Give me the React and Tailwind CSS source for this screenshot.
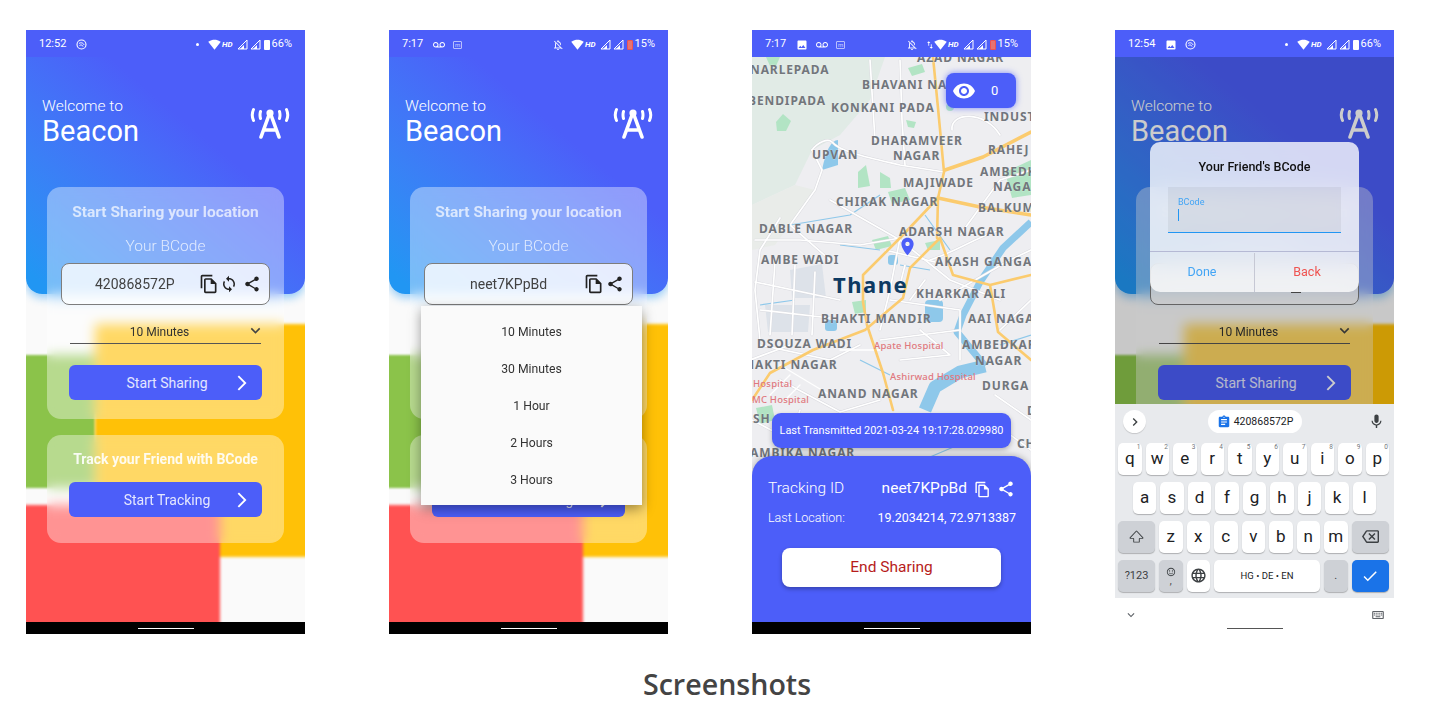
import React from "react";
import {
  MdOutlineFileCopy, MdSync, MdShare, MdArrowForwardIos, MdKeyboardArrowDown, MdRemoveRedEye, MdLocationOn,
  MdSignalWifi4Bar, MdVoicemail, MdImage, MdOutlineNotificationsOff, MdChevronRight, MdMic, MdAssignment,
  MdCheck, MdLanguage, MdOutlineBackspace, MdOutlineSentimentSatisfied, MdOutlineKeyboard, MdImportExport,
} from "react-icons/md";
import { BsShift } from "react-icons/bs";

const Sig = () => (
  <svg width="11" height="11" viewBox="0 0 11 11"><path d="M1 10L10 1V10Z" fill="none" stroke="white" strokeWidth="1" /><path d="M3 10L7 6V10Z" fill="white" /></svg>
);

const LinkIco = () => (
  <svg width="11" height="11" viewBox="0 0 11 11" fill="none" stroke="white"><circle cx="5.5" cy="5.5" r="4.5" strokeWidth="1.1" /><path d="M3 4.5C5 3 7.5 4 8 6M3.5 6.5C5 5.5 6.5 6 7 7.5" strokeWidth="1" /></svg>
);

const MBox = () => (
  <span className="w-[9px] h-[8px] border border-white/60 rounded-[1px] text-[6px] leading-[6px] text-center text-white/70">m</span>
);

function Status({ time, left, pct, low, mute, dot, arrows }) {
  return (
    <div className="relative z-20 h-[27px] shrink-0 bg-[#4c5ef9] flex items-center justify-between pl-[13px] pr-[13px] pt-[2px] text-white text-[11px] font-['Roboto',sans-serif]">
      <div className="flex items-center gap-[8px]"><span className="mr-[2px]">{time}</span>{left}</div>
      <div className="flex items-center">
        {dot && <span className="w-[3px] h-[3px] rounded-full bg-white mr-[9px]" />}
        {mute && <MdOutlineNotificationsOff size={12} className="mr-[7px] opacity-90" />}
        {arrows && <MdImportExport size={10} className="-mr-[1px]" />}
        <MdSignalWifi4Bar size={13} />
        <span className="text-[8px] font-bold italic ml-[1px] mr-[4px]">HD</span>
        <Sig /><span className="w-[2px]" /><Sig />
        <span className={`ml-[3px] mr-[1px] w-[6px] h-[10px] rounded-[1px] ${low ? "bg-[#e57373] border border-[#ef5350]" : "bg-white"}`} />
        <span className="ml-[1px]">{pct}</span>
      </div>
    </div>
  );
}

function Logo() {
  return (
    <svg width="40" height="32" viewBox="0 0 40 32" fill="none" stroke="white" strokeWidth="3.6" strokeLinecap="round">
      <circle cx="20" cy="6" r="3.6" fill="white" stroke="none" />
      <path d="M19 8L11 30M21 8L29 30M14 23H26" />
      <path d="M3.5 2.5Q1 8 3.5 13.5M10.5 4.5Q9.5 8 10.5 11.5M36.5 2.5Q39 8 36.5 13.5M29.5 4.5Q30.5 8 29.5 11.5" strokeWidth="3" />
    </svg>
  );
}

function GoButton({ label, offset }) {
  return (
    <div className="relative h-[35px] w-[193px] mx-auto rounded-[6px] bg-[#4c5ef9] flex items-center justify-center text-white/85 text-[14px]">
      <span className={`pt-[1px] ${offset}`}>{label}</span>
      <MdArrowForwardIos size={18} className="absolute right-[11px] text-white" />
    </div>
  );
}

function Home({ code, sync, covered }) {
  return (
    <div className="relative flex-1 flex flex-col min-h-0">
      <div className="absolute inset-0 bg-[#fafafa] overflow-hidden">
        <div className="absolute -left-[6px] top-[298px] w-[75px] h-[133px] bg-[#8bc34a] blur-[1px]" />
        <div className="absolute left-[69px] top-[267px] w-[216px] h-[233px] bg-[#ffc107] blur-[1.5px]" />
        <div className="absolute -left-[6px] top-[448px] w-[200px] h-[130px] bg-[#ff5252] blur-[1.5px]" />
        <div className="absolute left-0 top-0 w-full h-[237px] rounded-b-[16px] bg-linear-to-tr from-[#2196f3] from-5% to-[#4c5ef9] to-65% shadow-[0_4px_8px_rgba(33,150,243,0.45)]" />
      </div>
      <div className="relative h-[130px] shrink-0 flex justify-between pl-[16px] pr-[15px] pt-[38px] text-white">
        <div>
          <div className="text-[15.5px] leading-[20px] font-light pt-[1px]">Welcome to</div>
          <div className="text-[29px] leading-[36px] -mt-[3px]">Beacon</div>
        </div>
        <div className="pt-[12px]"><Logo /></div>
      </div>
      <div className="relative mx-[21px] h-[232px] rounded-[14px] bg-white/38 backdrop-blur-[6px] pt-[14px]">
        <div className="text-center h-[22px] leading-[22px] text-[15.5px] font-bold text-white/70">Start Sharing your location</div>
        <div className="text-center mt-[11px] h-[24px] leading-[24px] text-[15.5px] font-light text-white/75">Your BCode</div>
        <div className="relative mt-[5px] mx-[14px] h-[42px] rounded-[8px] border border-[#7d7d7d] bg-white/80 flex items-center text-[14px] text-[#424242]">
          {covered ? (
            <span className="absolute left-[140px] top-[28px] w-[10px] h-[1px] bg-[#555]" />
          ) : sync ? (
            <>
              <span className="ml-[33px] flex-1">{code}</span>
              <MdOutlineFileCopy size={20} className="text-[#222] mr-[1px]" />
              <MdSync size={18} className="text-[#222] mr-[5px]" />
              <MdShare size={18} className="text-[#222] mr-[8px]" />
            </>
          ) : (
            <>
              <span className="ml-[45px] flex-1">{code}</span>
              <MdOutlineFileCopy size={20} className="text-[#222] mr-[2px]" />
              <MdShare size={18} className="text-[#222] mr-[8px]" />
            </>
          )}
        </div>
        <div className="relative mt-[15px] mx-auto w-[191px] h-[24px] border-b-[1.5px] border-[#555] flex items-center justify-center text-[12px] text-[#333] pr-[12px]">
          <span>10 Minutes</span>
          <MdKeyboardArrowDown size={19} className="absolute right-[-4px] top-[1px] text-[#444]" />
        </div>
        <div className="mt-[21px]"><GoButton label="Start Sharing" offset="ml-[3px]" /></div>
      </div>
      <div className="relative mx-[21px] mt-[16px] h-[108px] rounded-[14px] bg-white/38 backdrop-blur-[6px] pt-[13px]">
        <div className="text-center h-[22px] leading-[22px] text-[14px] font-bold text-white/90">Track your Friend with BCode</div>
        <div className="mt-[12px]"><GoButton label="Start Tracking" offset="ml-[3px]" /></div>
      </div>
    </div>
  );
}

function Nav() {
  return (
    <div className="relative h-[12px] shrink-0 bg-black flex justify-center items-center z-20">
      <div className="w-[56px] h-[1px] bg-white" />
    </div>
  );
}

function Phone({ children }) {
  return <div className="relative w-[279px] h-[604px] shrink-0 overflow-hidden flex flex-col bg-white font-['Roboto',sans-serif]">{children}</div>;
}

const roadLabels = [
  ["NARLEPADA", 750, 74], ["AZAD NAGAR", 917, 62], ["BHAVANI NA", 862, 89], ["BENDIPADA", 748, 105], ["KONKANI PADA", 831, 112],
  ["INDUST", 984, 121], ["DHARAMVEER", 871, 145], ["NAGAR", 893, 160], ["UPVAN", 812, 159], ["RAHEJ", 988, 154],
  ["AMBEDK", 980, 176], ["NAGA", 993, 191], ["MAJIWADE", 903, 187], ["CHIRAK NAGAR", 836, 206], ["BALKUM", 978, 212],
  ["DABLE NAGAR", 759, 233], ["ADARSH NAGAR", 899, 236], ["AMBE WADI", 761, 264], ["AKASH GANGA", 935, 266], ["KHARKAR ALI", 916, 298],
  ["BHAKTI MANDIR", 821, 323], ["AAI NAGA", 968, 323], ["DSOUZA WADI", 757, 348], ["AMBEDKAR", 962, 349], ["NAGAR", 975, 365],
  ["BHAKTI NAGAR", 736, 369], ["DURGA", 982, 390], ["ANAND NAGAR", 818, 398], ["SH", 753, 423], ["AMBIKA NAGAR", 750, 457], ["CH", 1017, 448], ["D", 1027, 415],
];
const redLabels = [["Apate Hospital", 874, 349], ["Ashirwad Hospital", 890, 380], ["Hospital", 753, 387], ["MC Hospital", 752, 403]];

function MapArt() {
  const white = [
    "M812 150C818 142 828 138 832 142C840 152 870 158 900 165L944 172", "M812 150L822 170L815 190L790 225L830 260", "M900 60L902 120L905 165", "M952 130C950 112 985 110 1000 135",
    "M755 240L800 240L860 245L900 238", "M780 218L760 250L755 290L760 340", "M755 282L840 300M775 262L770 335M795 265L792 335M815 272L812 335M760 310L830 318",
    "M830 200L900 240L950 280L1000 300", "M900 238L890 290L880 330", "M930 260C960 250 970 240 1000 230", "M890 300L960 310L960 360",
    "M880 340L960 330M900 360L950 355L920 330", "M760 345L830 360L860 345", "M780 380L840 412L880 400", "M752 420L790 440L800 410", "M960 235L1000 180L1031 170",
    "M870 60L875 140", "M940 300L1010 260L1031 250", "M1000 330L1031 300", "M885 250L935 262M905 265L900 285M925 280L910 300", "M750 360L790 345", "M995 395L1031 420M990 420L1031 450",
  ];
  return (
    <svg className="absolute left-0 top-0" width="279" height="420" viewBox="752 57 279 420">
      <rect x="752" y="57" width="279" height="420" fill="#eeeef1" />
      <path d="M752 57H885L870 100L840 135L812 150L795 185L752 205Z" fill="#e1ebe6" />
      <path d="M752 205L795 185L815 190L775 245L752 250Z" fill="#e9ece9" />
      <g fill="#b2e4c4">
        <path d="M776 122L783 114L791 121L786 131L777 131Z" /><path d="M766 57L780 57L776 66L770 66Z" />
        <path d="M908 68L922 64L925 72L912 76Z" /><path d="M858 172L866 165L870 186L858 188Z" />
        <path d="M880 172L890 178L891 188L880 188Z" /><path d="M888 192L905 188L910 200L892 204Z" />
        <path d="M872 240L888 236L892 246L876 250Z" /><path d="M1005 172L1031 160L1031 195L1012 198Z" />
        <path d="M852 302L866 300L866 312L855 314Z" /><path d="M925 243L940 240L940 250L928 250Z" />
        <path d="M756 408L772 405L775 420L760 424Z" /><circle cx="950" cy="107" r="4" /><path d="M906 120L916 122L914 128L908 127Z" />
      </g>
      <g fill="#dde2e9"><path d="M765 305L810 305L808 332L768 332Z" /><path d="M790 270L822 264L826 298L792 298Z" /></g>
      <path d="M822 170Q828 140 838 140L838 165Z" fill="#8ec8ea" />
      <rect x="925" y="300" width="18" height="22" rx="4" fill="#8ec8ea" />
      <rect x="888" y="255" width="10" height="10" rx="3" fill="#8ec8ea" />
      <rect x="825" y="320" width="12" height="11" rx="3" fill="#8ec8ea" />
      <g fill="none" stroke="#8ec8ea" strokeLinejoin="round">
        <path d="M1031 222L1003 248L980 282L963 315L957 332L985 366" strokeWidth="7" />
        <path d="M985 366L960 372L935 387L925 410" strokeWidth="13" />
        <path d="M760 305L795 300M790 225L850 215L880 195M840 245L880 250M900 265L930 270M925 215L950 250M1000 345L1031 335M860 360L890 375M930 457L970 440" strokeWidth="1.2" />
      </g>
      <g fill="none" stroke="#d9d9de" strokeWidth="2.6" strokeLinecap="round" strokeLinejoin="round">
        {white.map((d, i) => <path key={i} d={d} />)}
      </g>
      <g fill="none" stroke="#ffffff" strokeWidth="1.7" strokeLinecap="round" strokeLinejoin="round">
        {white.map((d, i) => <path key={i} d={d} />)}
        <path d="M780 365L830 395M790 375L770 395M800 385L785 400M840 350L880 350" strokeWidth="1.3" />
      </g>
      <g fill="none" stroke="#fbcb6e" strokeWidth="2.6" strokeLinecap="round" strokeLinejoin="round">
        <path d="M933 57L938 108L944 172L938 198L937 238" />
        <path d="M945 170L983 157L1031 132" strokeWidth="3.6" />
        <path d="M938 198L980 207L1031 215" strokeWidth="3.6" />
        <path d="M938 198L900 238L863 275L863 302L867 325L883 373L893 410" />
        <path d="M940 238L910 268L903 298L865 330L813 350L770 373L752 400" />
        <path d="M940 238L953 275L990 285L1031 275M990 285L998 332L1031 360" />
      </g>
      <g fontFamily="'Noto Sans',sans-serif" fontWeight="700" fontSize="12" letterSpacing="0.9" fill="#72767c" stroke="#ffffff90" strokeWidth="0.4" paintOrder="stroke">
        {roadLabels.map(([t, x, y], i) => <text key={i} x={x} y={y}>{t}</text>)}
      </g>
      <g fontFamily="'Noto Sans',sans-serif" fontWeight="500" fontSize="9.5" letterSpacing="0.2" fill="#e0787e">
        {redLabels.map(([t, x, y], i) => <text key={i} x={x} y={y}>{t}</text>)}
      </g>
      <text x="833" y="293" fontFamily="'Noto Sans',sans-serif" fontWeight="700" fontSize="22" letterSpacing="1.5" fill="#0e3a62">Thane</text>
    </svg>
  );
}

function MapPhone() {
  return (
    <Phone>
      <Status time="7:17" mute arrows pct="15%" low left={<><MdImage size={12} /><MdVoicemail size={12} /><MBox /></>} />
      <div className="relative h-[420px] shrink-0 overflow-hidden">
        <MapArt />
        <MdLocationOn size={21} className="absolute left-[145px] top-[179px] text-[#4c5ef9]" />
        <div className="absolute left-[194px] top-[16px] w-[70px] h-[35px] rounded-[8px] bg-[#4c5ef9] shadow-[0_0_6px_rgba(76,94,249,0.7)] flex items-center text-white text-[13px]">
          <MdRemoveRedEye size={24} className="ml-[6px]" />
          <span className="ml-[15px]">0</span>
        </div>
        <div className="absolute left-[20px] top-[356px] w-[239px] h-[35px] rounded-[9px] bg-[#4c5ef9] shadow-[0_2px_5px_rgba(0,0,0,0.25)] pt-[1px] flex items-center justify-center text-white text-[10.9px] whitespace-nowrap">
          Last Transmitted 2021-03-24 19:17:28.029980
        </div>
      </div>
      <div className="relative -mt-[21px] flex-1 rounded-t-[20px] bg-[#4c5ef9] shadow-[0_-1px_6px_rgba(0,0,0,0.25)] text-white pl-[16px] pr-[16px] pt-[23px]">
        <div className="h-[20px] flex items-center text-[15.5px]">
          <span className="font-light">Tracking ID</span>
          <span className="ml-auto">neet7KPpBd</span>
          <MdOutlineFileCopy size={17} className="ml-[7px]" />
          <MdShare size={18} className="ml-[6px]" />
        </div>
        <div className="mt-[10px] h-[18px] flex items-center justify-between text-[12.5px] font-light">
          <span>Last Location:</span><span className="font-normal -mr-[1px]">19.2034214, 72.9713387</span>
        </div>
        <div className="mt-[21px] mx-[14px] h-[39px] rounded-[8px] bg-white shadow-[0_2px_4px_rgba(0,0,0,0.3)] pt-[1px] flex items-center justify-center text-[15.5px] text-[#b71c1c]">End Sharing</div>
      </div>
      <Nav />
    </Phone>
  );
}

function Key({ children, w = "w-[23.5px]", sup, gray, blue, text = "text-[17px]" }) {
  const bg = blue ? "bg-[#1a73e8] text-white" : gray ? "bg-[#ced1d6] text-[#3c4043]" : "bg-white text-[#202124]";
  return (
    <div className={`relative ${w} h-[31.5px] shrink-0 rounded-[5px] shadow-[0_1px_1px_rgba(0,0,0,0.25)] flex items-center justify-center ${bg} ${text}`}>
      {children}
      {sup && <span className="absolute right-[1px] top-[1px] text-[6.5px] leading-[7px] text-[#70757a]">{sup}</span>}
    </div>
  );
}

function Keyboard() {
  const r1 = [..."qwertyuiop"];
  return (
    <div className="absolute left-0 bottom-0 w-full z-30 bg-white">
      <div className="h-[194px] bg-[#e8eaed] px-[3px] pt-[6px] flex flex-col font-['Roboto',sans-serif]">
        <div className="relative h-[23px] flex items-center justify-center">
          <div className="absolute left-[5px] w-[23px] h-[23px] rounded-full bg-white shadow-[0_1px_1px_rgba(0,0,0,0.15)] flex items-center justify-center"><MdChevronRight size={16} className="text-[#3c4043]" /></div>
          <div className="h-[23px] w-[94px] ml-[1px] rounded-full bg-white flex items-center justify-center text-[10.5px] font-normal text-[#202124] gap-[3px]"><MdAssignment size={14} className="text-[#1a73e8]" />420868572P</div>
          <MdMic size={17} className="absolute right-[6px] text-[#3c4043]" />
        </div>
        <div className="mt-[10px] flex gap-[4px]">
          {r1.map((k, i) => <Key key={k} sup={String((i + 1) % 10)}>{k}</Key>)}
        </div>
        <div className="mt-[7.5px] flex gap-[4px] justify-center">
          {[..."asdfghjkl"].map(k => <Key key={k}>{k}</Key>)}
        </div>
        <div className="mt-[7.5px] flex gap-[4px]">
          <Key w="w-[37px]" gray text="text-[15px]"><BsShift /></Key>
          {[..."zxcvbnm"].map(k => <Key key={k}>{k}</Key>)}
          <Key w="w-[37px]" gray text="text-[17px]"><MdOutlineBackspace /></Key>
        </div>
        <div className="mt-[7.5px] flex gap-[4px]">
          <Key w="w-[37px]" gray text="text-[11px]">?123</Key>
          <Key gray text="text-[10px]"><span className="flex flex-col items-center leading-[8px]"><MdOutlineSentimentSatisfied size={10} /><span>,</span></span></Key>
          <Key text="text-[17px]"><MdLanguage className="text-[#3c4043]" /></Key>
          <Key w="w-[106px]" text="text-[9.5px]">HG • DE • EN</Key>
          <Key gray text="text-[11px]">.</Key>
          <Key w="w-[37px]" blue text="text-[18px]"><MdCheck /></Key>
        </div>
      </div>
      <div className="relative h-[36px] bg-white">
        <MdKeyboardArrowDown size={14} className="absolute left-[9px] top-[10px] text-[#5f6368]" />
        <MdOutlineKeyboard size={14} className="absolute right-[9px] top-[10px] text-[#5f6368]" />
        <div className="absolute left-[112px] top-[30px] w-[56px] h-[1px] bg-[#555]" />
      </div>
    </div>
  );
}

function DialogPhone() {
  return (
    <Phone>
      <Status time="12:54" dot pct="66%" left={<><MdImage size={12} /><LinkIco /></>} />
      <Home covered />
      <div className="absolute inset-x-0 top-[27px] bottom-0 z-10 bg-black/20">
        <div className="mt-[85px] mx-auto w-[209px] h-[150px] rounded-[10px] bg-white/78 backdrop-blur-[10px] flex flex-col">
          <div className="mt-[14px] h-[22px] leading-[22px] text-center text-[12.5px] font-medium text-[#111]">Your Friend's BCode</div>
          <div className="mt-[9px] mx-[18px] h-[46px] bg-black/5 border-b border-[#2196f3] pl-[10px] pt-[10px]">
            <div className="text-[9px] leading-[11px] text-[#42a5f5]">BCode</div>
            <div className="mt-[1px] w-[1px] h-[12px] bg-[#2196f3]" />
          </div>
          <div className="mt-auto h-[41px] flex border-t border-[#b5b9d4] text-[12.5px] pt-[1px]">
            <div className="flex-1 flex items-center justify-center text-[#42a5f5] border-r border-[#c6c8d4]">Done</div>
            <div className="flex-1 flex items-center justify-center text-[#ef5350]">Back</div>
          </div>
        </div>
      </div>
      <Keyboard />
    </Phone>
  );
}

function MenuPhone() {
  return (
    <Phone>
      <Status time="7:17" mute pct="15%" low left={<><MdVoicemail size={12} /><MBox /></>} />
      <Home code="neet7KPpBd" />
      <Nav />
      <div className="absolute left-[32px] top-[276px] w-[221px] h-[199px] z-10 bg-[#fafafa] shadow-[0_4px_12px_rgba(0,0,0,0.4)] pt-[2px] flex flex-col justify-center text-[12.2px] text-[#333]">
        {["10 Minutes", "30 Minutes", "1 Hour", "2 Hours", "3 Hours"].map(t => (
          <div key={t} className="h-[37px] flex items-center justify-center">{t}</div>
        ))}
      </div>
    </Phone>
  );
}

export default function App() {
  return (
    <div className="w-[1454px] h-[727px] bg-white overflow-hidden">
      <div className="flex gap-[84px] pl-[26px] pt-[30px]">
        <Phone>
          <Status time="12:52" dot pct="66%" left={<LinkIco />} />
          <Home code="420868572P" sync />
          <Nav />
        </Phone>
        <MenuPhone />
        <MapPhone />
        <DialogPhone />
      </div>
      <div className="mt-[29px] text-center text-[28.6px] leading-[42px] font-semibold text-[#444] font-['Open_Sans',sans-serif]">Screenshots</div>
    </div>
  );
}
